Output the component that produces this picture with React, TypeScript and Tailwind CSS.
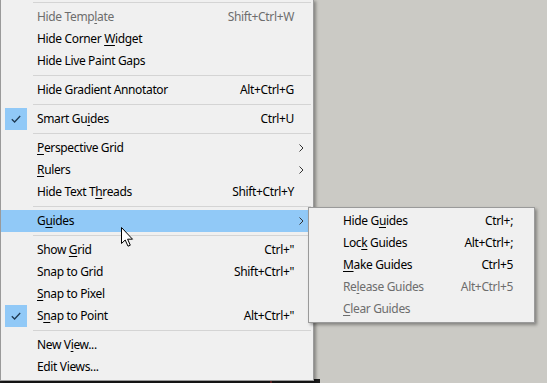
import React from 'react'

type Item =
  | { sep: true }
  | {
      sep?: false
      label: React.ReactNode
      shortcut?: string
      arrow?: boolean
      checked?: boolean
      disabled?: boolean
      active?: boolean
    }

// underline the access key letter
const u = (before: string, key: string, after: string) => (
  <>
    {before}
    <span className="underline underline-offset-[2px]">{key}</span>
    {after}
  </>
)

const mainItems: Item[] = [
  { sep: true },
  { label: u('Hide Temp', 'l', 'ate'), shortcut: 'Shift+Ctrl+W', disabled: true },
  { label: u('Hide Corner ', 'W', 'idget') },
  { label: 'Hide Live Paint Gaps' },
  { sep: true },
  { label: 'Hide Gradient Annotator', shortcut: 'Alt+Ctrl+G' },
  { sep: true },
  { label: u('Smart Gu', 'i', 'des'), shortcut: 'Ctrl+U', checked: true },
  { sep: true },
  { label: u('', 'P', 'erspective Grid'), arrow: true },
  { label: u('', 'R', 'ulers'), arrow: true },
  { label: u('Hide Text T', 'h', 'reads'), shortcut: 'Shift+Ctrl+Y' },
  { sep: true },
  { label: u('G', 'u', 'ides'), arrow: true, active: true },
  { sep: true },
  { label: u('Show ', 'G', 'rid'), shortcut: 'Ctrl+"' },
  { label: 'Snap to Grid', shortcut: 'Shift+Ctrl+"' },
  { label: u('', 'S', 'nap to Pixel') },
  { label: u('S', 'n', 'ap to Point'), shortcut: 'Alt+Ctrl+"', checked: true },
  { sep: true },
  { label: u('New V', 'i', 'ew...') },
  { label: 'Edit Views...' },
]

const subItems: Item[] = [
  { label: u('Hide G', 'u', 'ides'), shortcut: 'Ctrl+;' },
  { label: u('Loc', 'k', ' Guides'), shortcut: 'Alt+Ctrl+;' },
  { label: u('', 'M', 'ake Guides'), shortcut: 'Ctrl+5' },
  { label: u('Re', 'l', 'ease Guides'), shortcut: 'Alt+Ctrl+5', disabled: true },
  { label: u('', 'C', 'lear Guides'), disabled: true },
]

function Check() {
  return (
    <svg width="10" height="8" viewBox="0 0 10 8" fill="none">
      <path d="M0.8 4.2 L3.6 7 L9.2 1" stroke="#1f3a52" strokeWidth="1.3" />
    </svg>
  )
}

function Chevron() {
  return (
    <svg width="5" height="8" viewBox="0 0 5 8" fill="none">
      <path d="M0.5 0.5 L4 4 L0.5 7.5" stroke="#333" strokeWidth="1" />
    </svg>
  )
}

function MenuRows({ items, sub }: { items: Item[]; sub?: boolean }) {
  return (
    <>
      {items.map((it, i) =>
        it.sep ? (
          <div key={i} className="flex h-[7px] items-center pl-[32px] pr-[1px]">
            <div className="h-px w-full bg-[#d4d4d4]" />
          </div>
        ) : (
          <div
            key={i}
            className={`flex h-[22px] items-center pl-[4px] ${it.active ? 'bg-[#91c9f7]' : ''} ${
              it.disabled ? 'text-[#6d6d6d]' : 'text-black'
            }`}
          >
            <div
              className={`flex h-[22px] w-[22px] shrink-0 items-center justify-center ${
                it.checked ? 'bg-[#91c9f7]' : ''
              }`}
            >
              {it.checked && <Check />}
            </div>
            <div className={`flex-1 whitespace-nowrap ${sub ? 'pl-[8px]' : 'pl-[10px]'}`}>{it.label}</div>
            {it.shortcut && <div className="whitespace-nowrap">{it.shortcut}</div>}
            <div className={`flex h-full shrink-0 items-center ${sub ? 'w-[21px]' : 'w-[18px] pl-[5px]'}`}>
              {it.arrow && <Chevron />}
            </div>
          </div>
        )
      )}
    </>
  )
}

export default function App() {
  return (
    <div
      className="relative h-[383px] w-[547px] overflow-hidden bg-[#cbcac5] text-[12px] leading-none tracking-[-0.35px]"
      style={{ fontFamily: '"Segoe UI", "Noto Sans", sans-serif' }}
    >
      {/* dark canvas peeking out below the menu */}
      <div className="absolute bottom-0 left-0 h-[4px] w-[320px] bg-[#1c1c1c]">
        <div className="absolute left-[270px] top-0 h-[4px] w-[2px] bg-[#7a2a2a]" />
      </div>

      {/* main menu */}
      <div className="absolute left-0 top-[-1px] w-[314px] border border-t-0 border-[#9a9a9a] bg-[#f0f0f0] pb-[2px] pr-[1px] shadow-[2px_2px_3px_rgba(0,0,0,0.35)]">
        <MenuRows items={mainItems} />
      </div>

      {/* Guides submenu */}
      <div className="absolute left-[308px] top-[207px] w-[227px] border border-[#9a9a9a] bg-[#f0f0f0] py-[2px] shadow-[2px_2px_3px_rgba(0,0,0,0.35)]">
        <MenuRows items={subItems} sub />
      </div>

      {/* mouse cursor */}
      <svg className="absolute left-[120px] top-[226px]" width="14" height="22" viewBox="0 0 14 22">
        <path
          d="M1.5 1.5 L1.5 17.5 L5.2 14 L8 20.2 L10.3 19.2 L7.6 13.2 L12.5 13.2 Z"
          fill="#fff"
          stroke="#000"
          strokeWidth="1"
          strokeLinejoin="miter"
        />
      </svg>
    </div>
  )
}
